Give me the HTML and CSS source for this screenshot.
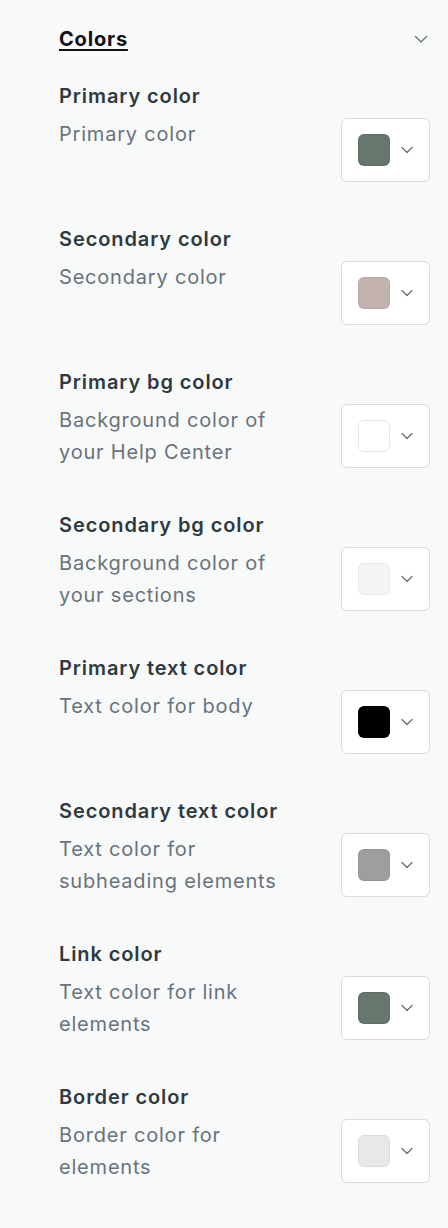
FILE: index.html
```html
<!DOCTYPE html>
<html lang="en">
<head>
<meta charset="utf-8">
<link rel="stylesheet" href="styles.css">
</head>
<body>
<div class="panel">
  <div class="header">
    <span class="title">Colors</span>
    <svg class="chev-top" width="16" height="16" viewBox="0 0 16 16"><path d="M2.5 5.5 L8 11 L13.5 5.5" fill="none" stroke="#68737d" stroke-width="1.4" stroke-linecap="round" stroke-linejoin="round"/></svg>
  </div>
  <div class="list">
    <div class="row">
      <div class="label">Primary color</div>
      <div class="desc">Primary color</div>
      <button class="picker"><span class="swatch sw-primary"></span><svg class="chev" width="14" height="14" viewBox="0 0 14 14"><path d="M2 4.5 L7 9.5 L12 4.5" fill="none" stroke="#68737d" stroke-width="1.4" stroke-linecap="round" stroke-linejoin="round"/></svg></button>
    </div>
    <div class="row">
      <div class="label">Secondary color</div>
      <div class="desc">Secondary color</div>
      <button class="picker"><span class="swatch sw-secondary"></span><svg class="chev" width="14" height="14" viewBox="0 0 14 14"><path d="M2 4.5 L7 9.5 L12 4.5" fill="none" stroke="#68737d" stroke-width="1.4" stroke-linecap="round" stroke-linejoin="round"/></svg></button>
    </div>
    <div class="row">
      <div class="label">Primary bg color</div>
      <div class="desc">Background color of your Help Center</div>
      <button class="picker"><span class="swatch sw-pbg"></span><svg class="chev" width="14" height="14" viewBox="0 0 14 14"><path d="M2 4.5 L7 9.5 L12 4.5" fill="none" stroke="#68737d" stroke-width="1.4" stroke-linecap="round" stroke-linejoin="round"/></svg></button>
    </div>
    <div class="row">
      <div class="label">Secondary bg color</div>
      <div class="desc">Background color of your sections</div>
      <button class="picker"><span class="swatch sw-sbg"></span><svg class="chev" width="14" height="14" viewBox="0 0 14 14"><path d="M2 4.5 L7 9.5 L12 4.5" fill="none" stroke="#68737d" stroke-width="1.4" stroke-linecap="round" stroke-linejoin="round"/></svg></button>
    </div>
    <div class="row">
      <div class="label">Primary text color</div>
      <div class="desc">Text color for body</div>
      <button class="picker"><span class="swatch sw-ptext"></span><svg class="chev" width="14" height="14" viewBox="0 0 14 14"><path d="M2 4.5 L7 9.5 L12 4.5" fill="none" stroke="#68737d" stroke-width="1.4" stroke-linecap="round" stroke-linejoin="round"/></svg></button>
    </div>
    <div class="row">
      <div class="label">Secondary text color</div>
      <div class="desc">Text color for subheading elements</div>
      <button class="picker"><span class="swatch sw-stext"></span><svg class="chev" width="14" height="14" viewBox="0 0 14 14"><path d="M2 4.5 L7 9.5 L12 4.5" fill="none" stroke="#68737d" stroke-width="1.4" stroke-linecap="round" stroke-linejoin="round"/></svg></button>
    </div>
    <div class="row">
      <div class="label">Link color</div>
      <div class="desc">Text color for link elements</div>
      <button class="picker"><span class="swatch sw-link"></span><svg class="chev" width="14" height="14" viewBox="0 0 14 14"><path d="M2 4.5 L7 9.5 L12 4.5" fill="none" stroke="#68737d" stroke-width="1.4" stroke-linecap="round" stroke-linejoin="round"/></svg></button>
    </div>
    <div class="row">
      <div class="label">Border color</div>
      <div class="desc">Border color for elements</div>
      <button class="picker"><span class="swatch sw-border"></span><svg class="chev" width="14" height="14" viewBox="0 0 14 14"><path d="M2 4.5 L7 9.5 L12 4.5" fill="none" stroke="#68737d" stroke-width="1.4" stroke-linecap="round" stroke-linejoin="round"/></svg></button>
    </div>
  </div>
</div>
</body>
</html>
```

FILE: styles.css
```css
html, body {
  margin: 0;
  padding: 0;
  background: #f8f9f9;
}
body {
  font-family: Inter, "Noto Sans", "Liberation Sans", sans-serif;
  -webkit-font-smoothing: antialiased;
}
.panel {
  padding: 25px 18px 40px 59px;
}
.header {
  display: flex;
  align-items: center;
  justify-content: space-between;
  height: 28px;
}
.title {
  font-size: 20px;
  font-weight: 700;
  color: #111;
  letter-spacing: 0.8px;
  text-decoration: underline;
  text-underline-offset: 3px;
  text-decoration-thickness: 2px;
  line-height: 28px;
}
.chev-top {
  margin-right: 1px;
}
.list {
  margin-top: 29px;
  display: flex;
  flex-direction: column;
  gap: 43px;
}
.row {
  display: grid;
  grid-template-columns: 1fr 89px;
  row-gap: 8px;
  column-gap: 20px;
}
.label {
  grid-column: 1 / 3;
  font-size: 20px;
  line-height: 28px;
  font-weight: 600;
  letter-spacing: 0.9px;
  color: #2f3941;
}
.desc {
  font-size: 20px;
  line-height: 32px;
  letter-spacing: 0.8px;
  color: #68737d;
  max-width: 236px;
}
.picker {
  width: 89px;
  height: 64px;
  box-sizing: border-box;
  border: 1px solid #d8dcde;
  border-radius: 6px;
  background: #fff;
  padding: 0 0 0 16px;
  display: flex;
  align-items: center;
  gap: 10px;
  margin: 0;
}
.swatch {
  width: 32px;
  height: 32px;
  box-sizing: border-box;
  border-radius: 6px;
  border: 1px solid rgba(0, 0, 0, 0.06);
  display: block;
}
.chev {
  display: block;
}
.sw-primary { background: #66786e; }
.sw-secondary { background: #c4b2b1; }
.sw-pbg { background: #ffffff; border-color: #e6e8e9; }
.sw-sbg { background: #f6f5f5; border-color: #e6e8e9; }
.sw-ptext { background: #000000; }
.sw-stext { background: #9e9e9e; }
.sw-link { background: #66786e; }
.sw-border { background: #eae7e7; border-color: #dcdcdc; }
```
